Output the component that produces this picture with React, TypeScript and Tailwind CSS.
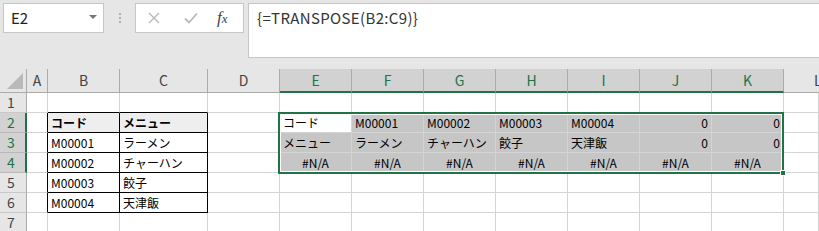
import React from "react";

const FONT = { fontFamily: '"Noto Sans CJK JP", "Noto Sans", sans-serif' };

const colW = [
  "w-[27px]",
  "w-[21px]",
  "w-[72px]",
  "w-[88px]",
  "w-[72px]",
  "w-[72px]",
  "w-[72px]",
  "w-[72px]",
  "w-[72px]",
  "w-[72px]",
  "w-[72px]",
  "w-[72px]",
  "flex-1",
];
const letters = ["A", "B", "C", "D", "E", "F", "G", "H", "I", "J", "K", "L"];

type C = { t?: string; a?: "l" | "r" | "c"; bold?: boolean; bg?: string };

const data: Record<number, Record<number, C>> = {
  2: {
    2: { t: "コード", bold: true, bg: "bg-[#eeeeee]" },
    3: { t: "メニュー", bold: true, bg: "bg-[#eeeeee]" },
    5: { t: "コード", bg: "bg-white" },
    6: { t: "M00001", bg: "bg-[#c6c6c6]" },
    7: { t: "M00002", bg: "bg-[#c6c6c6]" },
    8: { t: "M00003", bg: "bg-[#c6c6c6]" },
    9: { t: "M00004", bg: "bg-[#c6c6c6]" },
    10: { t: "0", a: "r", bg: "bg-[#c6c6c6]" },
    11: { t: "0", a: "r", bg: "bg-[#c6c6c6]" },
  },
  3: {
    2: { t: "M00001" },
    3: { t: "ラーメン" },
    5: { t: "メニュー", bg: "bg-[#c6c6c6]" },
    6: { t: "ラーメン", bg: "bg-[#c6c6c6]" },
    7: { t: "チャーハン", bg: "bg-[#c6c6c6]" },
    8: { t: "餃子", bg: "bg-[#c6c6c6]" },
    9: { t: "天津飯", bg: "bg-[#c6c6c6]" },
    10: { t: "0", a: "r", bg: "bg-[#c6c6c6]" },
    11: { t: "0", a: "r", bg: "bg-[#c6c6c6]" },
  },
  4: {
    2: { t: "M00002" },
    3: { t: "チャーハン" },
    5: { t: "#N/A", a: "c", bg: "bg-[#c6c6c6]" },
    6: { t: "#N/A", a: "c", bg: "bg-[#c6c6c6]" },
    7: { t: "#N/A", a: "c", bg: "bg-[#c6c6c6]" },
    8: { t: "#N/A", a: "c", bg: "bg-[#c6c6c6]" },
    9: { t: "#N/A", a: "c", bg: "bg-[#c6c6c6]" },
    10: { t: "#N/A", a: "c", bg: "bg-[#c6c6c6]" },
    11: { t: "#N/A", a: "c", bg: "bg-[#c6c6c6]" },
  },
  5: { 2: { t: "M00003" }, 3: { t: "餃子" } },
  6: { 2: { t: "M00004" }, 3: { t: "天津飯" } },
};

function borderClasses(r: number, c: number) {
  let right = "border-r-[#d4d4d4]";
  if (r >= 2 && r <= 6 && (c === 1 || c === 2 || c === 3)) right = "border-r-black";
  let bottom = "border-b-[#d4d4d4]";
  if (r >= 1 && r <= 6 && (c === 2 || c === 3)) bottom = "border-b-black";
  return `${right} ${bottom}`;
}

function Row({ r }: { r: number }) {
  const sel = r >= 2 && r <= 4;
  return (
    <div className="flex h-[20px]">
      <div
        className={
          sel
            ? "w-[27px] shrink-0 h-[20px] bg-[#d2d2d2] border-b border-b-[#b8b8b8] border-r-2 border-r-[#217346] text-[#217346] text-[14px] leading-[19px] pl-[7px]"
            : "w-[27px] shrink-0 h-[20px] bg-[#e6e6e6] border-b border-b-[#c8c8c8] border-r border-r-[#ababab] text-[#444] text-[14px] leading-[19px] pl-[7px]"
        }
      >
        {r}
      </div>
      {colW.slice(1).map((w, i) => {
        const c = i + 1;
        const cell = data[r]?.[c];
        const align =
          cell?.a === "r" ? "text-right pr-[3px]" : cell?.a === "c" ? "text-center" : "text-left pl-[3px]";
        return (
          <div
            key={c}
            className={`${w} shrink-0 h-[20px] border-r border-b ${borderClasses(r, c)} ${cell?.bg ?? "bg-white"} ${align} ${cell?.bold ? "font-bold" : ""} text-[12px] leading-[19px] text-black whitespace-nowrap overflow-hidden`}
          >
            {cell?.t ?? ""}
          </div>
        );
      })}
    </div>
  );
}

export default function App() {
  return (
    <div className="w-[819px] h-[231px] overflow-hidden bg-white" style={FONT}>
      {/* Formula bar */}
      <div className="h-[69px] bg-[#e6e6e6] flex items-start pt-[3px] pl-[3px]">
        <div className="w-[101px] h-[30px] bg-white border border-[#c6c6c6] flex items-center pl-[7px] pr-[6px]">
          <span className="text-[15px] text-[#222] flex-1">E2</span>
          <span className="w-0 h-0 border-l-[4px] border-r-[4px] border-t-[4px] border-l-transparent border-r-transparent border-t-[#777] mb-[2px]" />
        </div>
        <div className="w-[31px] h-[30px] flex flex-col items-center justify-center gap-[2px]">
          <span className="w-[2px] h-[2px] bg-[#b0b0b0]" />
          <span className="w-[2px] h-[2px] bg-[#b0b0b0]" />
          <span className="w-[2px] h-[2px] bg-[#b0b0b0]" />
        </div>
        <div className="w-[109px] h-[30px] bg-white border border-[#c6c6c6] flex items-center">
          <svg width="12" height="12" viewBox="0 0 12 12" className="ml-[12px]">
            <path d="M1 1 L11 11 M11 1 L1 11" stroke="#b8b8b8" strokeWidth="1.4" fill="none" />
          </svg>
          <svg width="14" height="12" viewBox="0 0 14 12" className="ml-[24px]">
            <path d="M1 6.5 L5 10.5 L13 1.5" stroke="#b8b8b8" strokeWidth="1.8" fill="none" />
          </svg>
          <span
            className="ml-[19px] mb-[2px] text-[17px] italic text-[#444] leading-none"
            style={{ fontFamily: '"Liberation Serif", serif' }}
          >
            f<span className="text-[13px]">x</span>
          </span>
        </div>
        <div className="ml-[4px] flex-1 h-[55px] bg-white border border-[#c6c6c6] border-r-0 pl-[8px] pt-[3px] text-[15px] text-[#333] tracking-[0.35px]">
          {"{=TRANSPOSE(B2:C9)}"}
        </div>
      </div>

      {/* Grid */}
      <div className="relative">
        <div className="flex h-[24px]">
          <div className="w-[27px] shrink-0 h-[24px] bg-[#e6e6e6] border-r border-r-[#ababab] border-b border-b-[#ababab] relative">
            <span
              className="absolute right-[3px] bottom-[3px] w-0 h-0"
              style={{ borderBottom: "16px solid #b9b9b9", borderLeft: "16px solid transparent" }}
            />
          </div>
          {letters.map((l, i) => {
            const sel = i >= 4 && i <= 10;
            return (
              <div
                key={l}
                className={
                  sel
                    ? `${colW[i + 1]} shrink-0 h-[24px] bg-[#d2d2d2] border-r border-r-[#ababab] border-b-2 border-b-[#217346] text-[#217346] text-[14px] leading-[22px] text-center`
                    : `${colW[i + 1]} shrink-0 h-[24px] bg-[#e6e6e6] border-r border-r-[#ababab] border-b border-b-[#ababab] text-[#444] text-[14px] leading-[23px] ${l === "L" ? "text-left pl-[30px]" : "text-center"}`
                }
              >
                {l}
              </div>
            );
          })}
        </div>
        {[1, 2, 3, 4, 5, 6, 7].map((r) => (
          <Row key={r} r={r} />
        ))}

        {/* Selection outline */}
        <div className="absolute left-[278px] top-[43px] w-[506px] h-[62px] border-2 border-[#217346] pointer-events-none">
          <div className="w-full h-full border border-white" />
        </div>
        <div className="absolute left-[780px] top-[101px] w-[6px] h-[6px] bg-[#217346] border border-white" />
      </div>
    </div>
  );
}
